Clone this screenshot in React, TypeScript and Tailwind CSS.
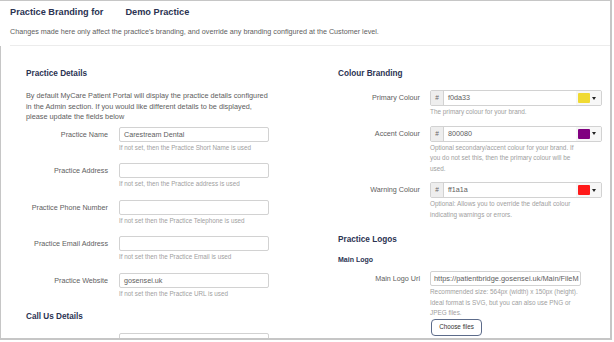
import React from 'react'

type TextRow = { label: string; value?: string; help: string }

const detailRows: TextRow[] = [
  { label: 'Practice Name', value: 'Carestream Dental', help: 'If not set, then the Practice Short Name is used' },
  { label: 'Practice Address', help: 'If not set, then the Practice address is used' },
  { label: 'Practice Phone Number', help: 'If not set then the Practice Telephone is used' },
  { label: 'Practice Email Address', help: 'If not set then the Practice Email is used' },
  { label: 'Practice Website', value: 'gosensei.uk', help: 'If not set then the Practice URL is used' },
]

const colourRows = [
  { label: 'Primary Colour', value: 'f0da33', swatch: 'bg-[#f0da33]', help: 'The primary colour for your brand.' },
  {
    label: 'Accent Colour',
    value: '800080',
    swatch: 'bg-[#800080]',
    help: 'Optional secondary/accent colour for your brand. If you do not set this, then the primary colour will be used.',
  },
  {
    label: 'Warning Colour',
    value: 'ff1a1a',
    swatch: 'bg-[#ff1a1a]',
    help: 'Optional: Allows you to override the default colour indicating warnings or errors.',
  },
]

function FieldRow({ row }: { row: TextRow }) {
  return (
    <div className="flex gap-[11px]">
      <label className="w-[82px] shrink-0 text-right text-[7.2px] leading-[15px] text-[#5e5e5e]">{row.label}</label>
      <div className="w-[150px]">
        <div className="h-[15px] rounded-[2px] border border-[#d2d2d2] bg-white px-[4px] text-[7.2px] leading-[13px] text-[#5e5e5e]">
          {row.value}
        </div>
        <p className="mt-[1px] text-[6.3px] leading-[10.5px] text-[#a0a0a0]">{row.help}</p>
      </div>
    </div>
  )
}

export default function App() {
  return (
    <div className="w-[612px] h-[340px] overflow-hidden border-t border-r-2 border-b-2 border-[#c6c6c6] bg-white font-['Liberation_Sans',Arial,sans-serif]">
      {/* Page heading */}
      <div className="pl-[10px]">
        <div className="border-b border-[#ececec] pb-[8px]">
          <div className="flex h-[24px] items-center gap-[22px] text-[9.2px] font-bold text-[#2b3352]">
            <span>Practice Branding for</span>
            <span>Demo Practice</span>
          </div>
          <p className="mt-[2px] text-[7.2px] leading-[10px] text-[#5e5e5e]">
            Changes made here only affect the practice's branding, and override any branding configured at the Customer level.
          </p>
        </div>
      </div>

      <div className="flex h-full border-l border-[#c6c6c6] pl-[25px] pt-[23px]">
        {/* Practice details */}
        <div className="w-[312px] shrink-0">
          <h2 className="text-[8.2px] font-bold leading-[10px] text-[#2b3352]">Practice Details</h2>
          <p className="mt-[12px] w-[246px] text-[7.3px] leading-[10.5px] text-[#5e5e5e]">
            By default MyCare Patient Portal will display the practice details configured in the Admin section. If you
            would like different details to be displayed, please update the fields below
          </p>
          <div className="mt-[4px] flex flex-col gap-[10px]">
            {detailRows.map((row) => (
              <FieldRow key={row.label} row={row} />
            ))}
          </div>
          <h2 className="mt-[13px] text-[8.2px] font-bold leading-[10px] text-[#2b3352]">Call Us Details</h2>
          <div className="mt-[11px] flex gap-[11px]">
            <div className="w-[82px] shrink-0" />
            <div className="h-[15px] w-[150px] rounded-[2px] border border-[#d2d2d2]" />
          </div>
        </div>

        {/* Colours and logos */}
        <div className="w-[264px] shrink-0">
          <h2 className="text-[8.2px] font-bold leading-[10px] text-[#2b3352]">Colour Branding</h2>
          <div className="mt-[11px] flex flex-col gap-[8px]">
            {colourRows.map((row) => (
              <div key={row.label} className="flex gap-[10px]">
                <label className="w-[82px] shrink-0 text-right text-[7.2px] leading-[16px] text-[#5e5e5e]">{row.label}</label>
                <div className="w-[172px]">
                  <div className="flex h-[16px] overflow-hidden rounded-[2px] border border-[#d2d2d2]">
                    <span className="flex w-[13px] items-center justify-center border-r border-[#d2d2d2] bg-[#eeeeee] text-[6.5px] text-[#666]">
                      #
                    </span>
                    <span className="flex-1 pl-[4px] text-[7.2px] leading-[14px] text-[#5e5e5e]">{row.value}</span>
                    <span className="flex w-[25px] items-center gap-[2px] bg-[#f7f7f7] pl-[2px]">
                      <span className={`h-[10px] w-[12px] rounded-[1px] ${row.swatch}`} />
                      <span className="h-0 w-0 border-x-[2.5px] border-t-[3px] border-x-transparent border-t-[#222]" />
                    </span>
                  </div>
                  <p className="mt-[1px] w-[152px] text-[6.4px] leading-[10.5px] text-[#a0a0a0]">{row.help}</p>
                </div>
              </div>
            ))}
          </div>

          <h2 className="mt-[15px] text-[8.2px] font-bold leading-[10px] text-[#2b3352]">Practice Logos</h2>
          <h3 className="mt-[10px] text-[7px] font-bold leading-[10px] text-[#2b3352]">Main Logo</h3>
          <div className="mt-[6px] flex gap-[10px]">
            <label className="w-[82px] shrink-0 text-right text-[7.2px] leading-[15px] text-[#5e5e5e]">Main Logo Url</label>
            <div className="w-[152px]">
              <div className="h-[15px] w-[151px] overflow-hidden whitespace-nowrap rounded-[2px] border border-[#d2d2d2] px-[3px] text-[7.4px] leading-[13px] text-[#5e5e5e]">
                https://patientbridge.gosensei.uk/Main/FileM
              </div>
              <p className="mt-[1px] text-[6.4px] leading-[10.5px] text-[#a0a0a0]">
                Recommended size: 564px (width) x 150px (height). Ideal format is SVG, but you can also use PNG or JPEG
                files.
              </p>
              <button className="ml-[1px] block h-[17px] w-[51px] rounded-[4px] border border-[#5c6b8a] bg-white text-[6.3px] text-[#333]">
                Choose files
              </button>
            </div>
          </div>
        </div>
      </div>
    </div>
  )
}
